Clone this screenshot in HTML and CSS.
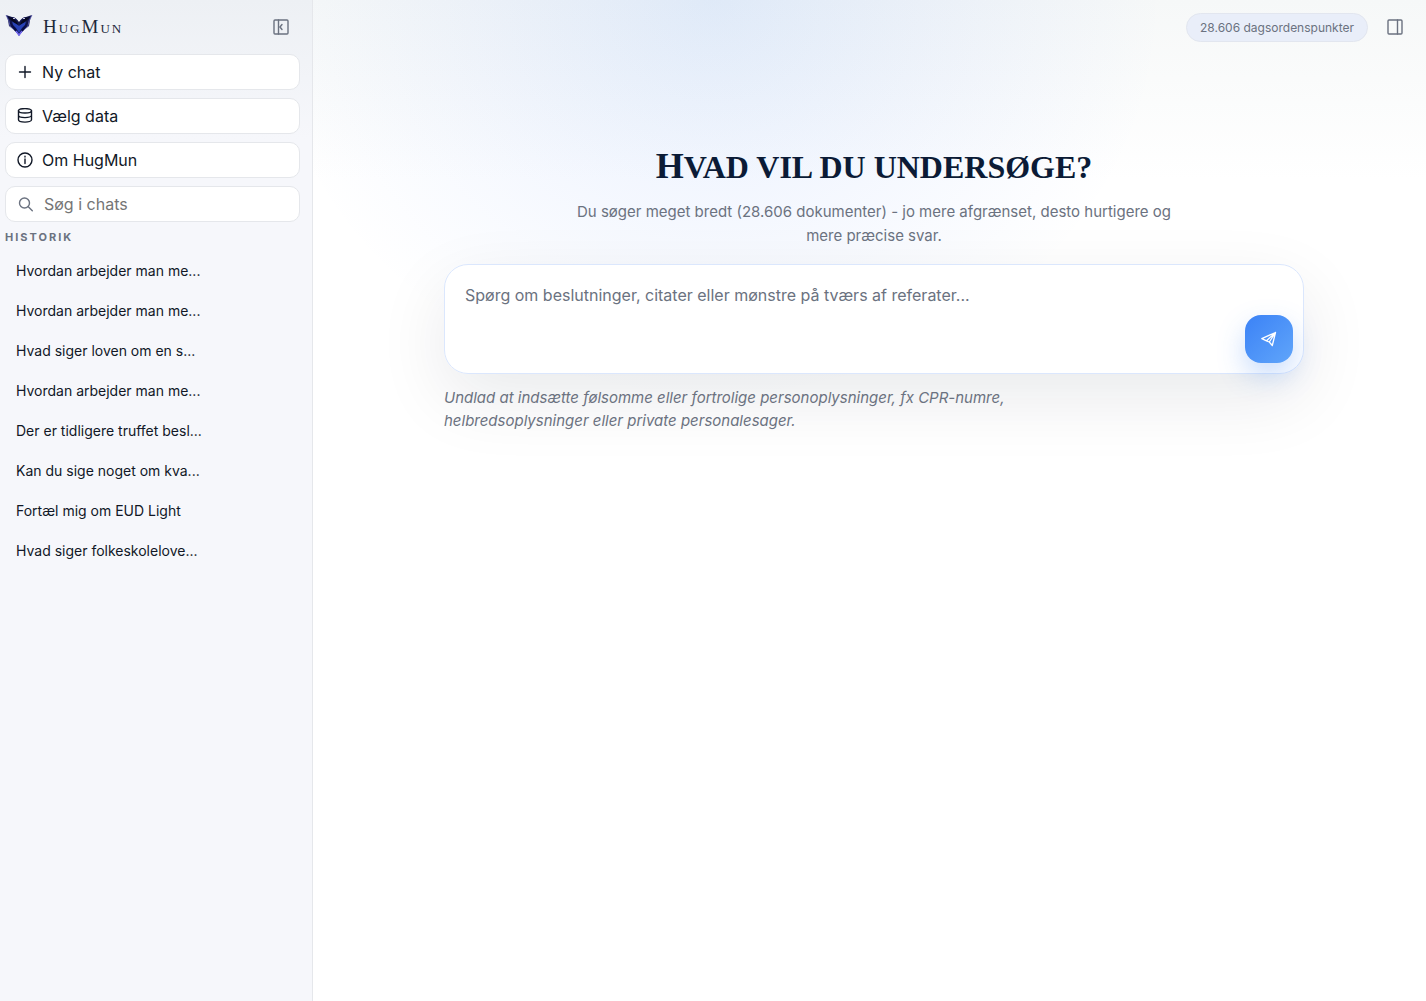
FILE: index.html
```
<!DOCTYPE html>
<html lang="da">
<head>
<meta charset="utf-8">
<meta name="viewport" content="width=device-width, initial-scale=1">
<title>HugMun</title>
<link rel="stylesheet" href="styles.css">
</head>
<body>
<div class="app">
  <aside class="sidebar">
    <header class="brand">
      <svg class="brand-logo" viewBox="0 0 28 24" aria-hidden="true">
        <path d="M1 0 7 2C10 2 12 4 14 7 16 4 18 2 21 2L27 0 25 5 24 11 19 15 16 18 14 21 12 18 9 15 4 11 3 5Z" fill="#11154c"/>
        <path d="M7 6 11 8 14 11 17 8 21 6 20 10 17 13 14 18 11 13 8 10Z" fill="#2741b5"/>
        <path d="M3 2 8 3 12 7 13 10 8 7ZM25 2 20 3 16 7 15 10 20 7Z" fill="#070923"/>
        <path d="M5 7 11 14 14 19 9 15ZM23 7 17 14 14 19 19 15Z" fill="#080d45"/>
        <path d="M1 0 4 6 5 11 9 15M27 0 24 6 23 11 19 15" fill="none" stroke="#6d6bc4" stroke-width=".7"/>
        <path d="M11 16 14 20 17 16" fill="none" stroke="#6f64ef" stroke-width="1.500"/>
        <path d="M8 3.500h2M18 3.500h2" stroke="#c8c9ea"/>
      </svg>
      <span class="brand-name">HugMun</span>
      <button class="icon-button" type="button" aria-label="Skjul sidepanel">
        <svg class="icon" viewBox="0 0 16 16" aria-hidden="true"><rect x="1" y="1" width="14" height="14" rx="1"/><path d="M5.500 1v14M9 5.500 7 8l2 2.500"/></svg>
      </button>
    </header>
    <nav class="actions" aria-label="Menu">
      <button class="action" type="button">
        <svg class="icon" viewBox="0 0 16 16" aria-hidden="true"><path d="M8 2.500v11M2.500 8h11"/></svg>
        Ny chat
      </button>
      <button class="action" type="button">
        <svg class="icon" viewBox="0 0 16 16" aria-hidden="true"><ellipse cx="8" cy="2.800" rx="6.500" ry="2.200"/><path d="M1.500 2.800v9c0 1.300 2.900 2.300 6.500 2.300s6.500-1 6.500-2.300v-9M1.500 7.300c0 1.300 2.900 2.300 6.500 2.300s6.500-1 6.500-2.300"/></svg>
        Vælg data
      </button>
      <button class="action" type="button">
        <svg class="icon" viewBox="0 0 16 16" aria-hidden="true"><circle cx="8" cy="8" r="7"/><path d="M8 7v4.500M8 4.200v.800"/></svg>
        Om HugMun
      </button>
      <label class="search">
        <svg class="icon" viewBox="0 0 16 16" aria-hidden="true"><circle cx="6.500" cy="7" r="5"/><path d="m10.300 10.800 4 4"/></svg>
        <input class="search-input" type="search" placeholder="Søg i chats" aria-label="Søg i chats">
      </label>
    </nav>
    <h2 class="history-title">Historik</h2>
    <ul class="history">
      <li><a class="history-link" href="#">Hvordan arbejder man me...</a></li>
      <li><a class="history-link" href="#">Hvordan arbejder man me...</a></li>
      <li><a class="history-link" href="#">Hvad siger loven om en s...</a></li>
      <li><a class="history-link" href="#">Hvordan arbejder man me...</a></li>
      <li><a class="history-link" href="#">Der er tidligere truffet besl...</a></li>
      <li><a class="history-link" href="#">Kan du sige noget om kva...</a></li>
      <li><a class="history-link" href="#">Fortæl mig om EUD Light</a></li>
      <li><a class="history-link" href="#">Hvad siger folkeskolelove...</a></li>
    </ul>
  </aside>
  <main class="main">
    <header class="topbar">
      <span class="count">28.606 dagsordenspunkter</span>
      <button class="icon-button" type="button" aria-label="Vis kilder">
        <svg class="icon" viewBox="0 0 16 16" aria-hidden="true"><rect x="1" y="1" width="14" height="14" rx="1"/><path d="M10.500 1v14"/></svg>
      </button>
    </header>
    <section class="hero">
      <h1 class="hero-title">Hvad vil du undersøge?</h1>
      <p class="hero-text">Du søger meget bredt (28.606 dokumenter) - jo mere afgrænset, desto hurtigere og mere præcise svar.</p>
      <form class="composer">
        <textarea class="composer-input" aria-label="Spørgsmål" placeholder="Spørg om beslutninger, citater eller mønstre på tværs af referater..."></textarea>
        <button class="send" type="button" aria-label="Send">
          <svg class="send-icon" viewBox="0 0 16 16" aria-hidden="true"><path d="M14.500 1.500.8 7.600l4.700 2.200ZM14.500 1.500 11.300 14.500 8.300 11ZM5.500 9.800 8.300 11"/></svg>
        </button>
      </form>
      <p class="notice">Undlad at indsætte følsomme eller fortrolige personoplysninger, fx CPR-numre, helbredsoplysninger eller private personalesager.</p>
    </section>
  </main>
</div>
</body>
</html>
```
FILE: styles.css
```
* { box-sizing: border-box; }

body {
  margin: 0;
  min-height: 100vh;
  color: #111827;
  font-family: Inter, "Liberation Sans", sans-serif;
  font-size: 16px;
  line-height: 24px;
  background:
    radial-gradient(ellipse 450px 400px at 50% 0, rgba(59, 130, 246, 0.12), rgba(59, 120, 246, 0.06) 50%, transparent) no-repeat,
    linear-gradient(#f6f8f8, #fff 180px) no-repeat,
    #fff;
}

button, input, textarea { font: inherit; color: inherit; }
button { cursor: pointer; }

.app {
  display: grid;
  grid-template-columns: 313px minmax(0, 1fr);
  min-height: 100vh;
}

.icon {
  flex: none;
  width: 16px;
  height: 16px;
  fill: none;
  stroke: currentColor;
  stroke-width: 1.4;
  stroke-linecap: round;
  stroke-linejoin: round;
}

.icon-button {
  display: grid;
  place-items: center;
  width: 38px;
  height: 38px;
  padding: 0;
  border: 0;
  background: none;
  color: #6b7280;
}

/* Sidebar */
.sidebar {
  padding: 0 12px 0 5px;
  border-right: 1px solid #e5e7eb;
  background: linear-gradient(#edf0f4, #f6f7fb 140px);
}

.brand {
  display: flex;
  align-items: center;
  height: 54px;
}

.brand-logo {
  width: 28px;
  height: 24px;
}

.brand-name {
  flex: 1;
  margin-left: 10px;
  color: #1e293b;
  font-family: "Liberation Serif", serif;
  font-size: 19px;
  font-variant: small-caps;
  letter-spacing: 2px;
}

.actions {
  display: grid;
  grid-template-columns: minmax(0, 1fr);
  gap: 8px;
}

.action, .search {
  display: flex;
  align-items: center;
  gap: 9px;
  width: 100%;
  height: 36px;
  padding: 0 11px;
  border: 1px solid #e5e7eb;
  border-radius: 10px;
  background: #fff;
}

.search {
  gap: 10px;
  padding: 0 12px;
  color: #6b7280;
}

.search-input {
  flex: 1;
  min-width: 0;
  padding: 0;
  border: 0;
  outline: 0;
  background: none;
}

.search-input::placeholder { color: #757575; }

.history-title {
  margin: 5px 0 4px;
  color: #6b7280;
  font-size: 11px;
  font-weight: 700;
  line-height: 20px;
  letter-spacing: 2px;
  text-transform: uppercase;
}

.history {
  margin: 0;
  padding: 0;
  list-style: none;
}

.history-link {
  display: block;
  padding: 0 11px;
  color: inherit;
  font-size: 14px;
  line-height: 40px;
  text-decoration: none;
}

/* Main column */
.main { padding-left: 9px; }

.topbar {
  display: flex;
  align-items: center;
  justify-content: flex-end;
  gap: 8px;
  height: 54px;
  padding-right: 12px;
}

.count {
  padding: 0 13px;
  border: 1px solid #e2e6ef;
  border-radius: 999px;
  background: #e9eef9;
  color: #6b7280;
  font-size: 12px;
  line-height: 27px;
}

.hero {
  width: 100%;
  max-width: 860px;
  margin: 90px auto 0;
}

.hero-title {
  margin: 0;
  color: #0b1b36;
  font-family: "Liberation Serif", serif;
  font-size: 32px;
  font-weight: 700;
  line-height: 44px;
  text-align: center;
  text-transform: uppercase;
}

.hero-title::first-letter { font-size: 36px; }

.hero-text {
  max-width: 620px;
  margin: 11px auto 16px;
  color: #6b7280;
  font-size: 15px;
  text-align: center;
}

.composer {
  display: flex;
  align-items: flex-end;
  min-height: 110px;
  padding: 10px 10px 10px 20px;
  border: 1px solid #dbe7fd;
  border-radius: 24px;
  background: rgba(255, 255, 255, 0.94);
  box-shadow: 0 24px 70px rgba(15, 23, 42, 0.09);
}

.composer-input {
  flex: 1;
  align-self: stretch;
  min-width: 0;
  padding: 8px 0;
  border: 0;
  outline: 0;
  resize: none;
  background: none;
}

.composer-input::placeholder { color: #6b7280; }

.send {
  display: grid;
  place-items: center;
  width: 48px;
  height: 48px;
  padding: 0;
  border: 0;
  border-radius: 16px;
  background: linear-gradient(135deg, #3b82f6, #60a5fa);
  box-shadow: 0 12px 28px rgba(59, 130, 246, 0.28);
  color: #fff;
}

.send-icon {
  width: 16px;
  height: 16px;
  fill: none;
  stroke: currentColor;
  stroke-width: 1.3;
  stroke-linejoin: round;
}

.notice {
  max-width: 600px;
  margin: 12px 0 0;
  color: #6b7280;
  font-size: 15px;
  font-style: italic;
  line-height: 23px;
}
```
